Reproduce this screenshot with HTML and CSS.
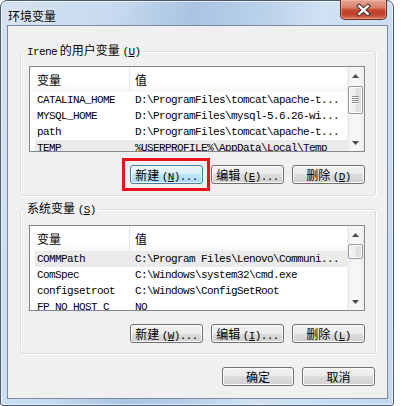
FILE: index.html
```html
<!DOCTYPE html>
<html lang="zh-CN">
<head>
  <meta charset="UTF-8">
  <meta name="viewport" content="width=device-width, initial-scale=1.0">
  <title>环境变量</title>
  <link rel="stylesheet" href="styles.css">
</head>
<body>
  <div class="window">
    <div class="titlebar">
      <span class="title">环境变量</span>
      <button class="close-btn" aria-label="关闭">
        <svg width="47" height="20" viewBox="0 0 47 20">
          <path d="M19 6 L28 14 M28 6 L19 14" stroke="#3b2f2c" stroke-width="4.5" stroke-linecap="square" fill="none"/>
          <path d="M19 6 L28 14 M28 6 L19 14" stroke="#ffffff" stroke-width="2.4" stroke-linecap="square" fill="none"/>
        </svg>
      </button>
    </div>

    <div class="client">
      <!-- User variables -->
      <fieldset class="group">
        <legend><span class="acc">Irene</span> 的用户变量 <span class="acc">(<u>U</u>)</span></legend>
        <div class="listview">
          <div class="list-body">
            <div class="list-head">
              <div class="head-cell">变量</div>
              <div class="head-cell">值</div>
            </div>
            <div class="list-row">
              <div class="cell">CATALINA_HOME</div>
              <div class="cell">D:\ProgramFiles\tomcat\apache-t...</div>
            </div>
            <div class="list-row">
              <div class="cell">MYSQL_HOME</div>
              <div class="cell">D:\ProgramFiles\mysql-5.6.26-wi...</div>
            </div>
            <div class="list-row">
              <div class="cell">path</div>
              <div class="cell">D:\ProgramFiles\tomcat\apache-t...</div>
            </div>
            <div class="list-row selected">
              <div class="cell">TEMP</div>
              <div class="cell">%USERPROFILE%\AppData\Local\Temp</div>
            </div>
          </div>
          <div class="scrollbar">
            <div class="sb-arrow">
              <svg width="7" height="4" viewBox="0 0 7 4"><polygon points="3.5,0 7,4 0,4" fill="#4a4a4a"/></svg>
            </div>
            <div class="sb-track">
              <div class="sb-thumb thumb-user"><span class="grip"></span></div>
            </div>
            <div class="sb-arrow">
              <svg width="7" height="4" viewBox="0 0 7 4"><polygon points="0,0 7,0 3.5,4" fill="#4a4a4a"/></svg>
            </div>
          </div>
        </div>
        <div class="btn-row">
          <button class="btn hot">新建 <span class="acc">(<u>N</u>)...</span></button>
          <button class="btn">编辑 <span class="acc">(<u>E</u>)...</span></button>
          <button class="btn">删除 <span class="acc">(<u>D</u>)</span></button>
        </div>
      </fieldset>

      <!-- System variables -->
      <fieldset class="group group-sys">
        <legend>系统变量 <span class="acc">(<u>S</u>)</span></legend>
        <div class="listview">
          <div class="list-body">
            <div class="list-head">
              <div class="head-cell">变量</div>
              <div class="head-cell">值</div>
            </div>
            <div class="list-row selected">
              <div class="cell">COMMPath</div>
              <div class="cell">C:\Program Files\Lenovo\Communi...</div>
            </div>
            <div class="list-row">
              <div class="cell">ComSpec</div>
              <div class="cell">C:\Windows\system32\cmd.exe</div>
            </div>
            <div class="list-row">
              <div class="cell">configsetroot</div>
              <div class="cell">C:\Windows\ConfigSetRoot</div>
            </div>
            <div class="list-row">
              <div class="cell">FP_NO_HOST_C</div>
              <div class="cell">NO</div>
            </div>
          </div>
          <div class="scrollbar">
            <div class="sb-arrow">
              <svg width="7" height="4" viewBox="0 0 7 4"><polygon points="3.5,0 7,4 0,4" fill="#4a4a4a"/></svg>
            </div>
            <div class="sb-track">
              <div class="sb-thumb thumb-sys"></div>
            </div>
            <div class="sb-arrow">
              <svg width="7" height="4" viewBox="0 0 7 4"><polygon points="0,0 7,0 3.5,4" fill="#4a4a4a"/></svg>
            </div>
          </div>
        </div>
        <div class="btn-row">
          <button class="btn">新建 <span class="acc">(<u>W</u>)...</span></button>
          <button class="btn">编辑 <span class="acc">(<u>I</u>)...</span></button>
          <button class="btn">删除 <span class="acc">(<u>L</u>)</span></button>
        </div>
      </fieldset>

      <div class="dialog-buttons">
        <button class="btn">确定</button>
        <button class="btn">取消</button>
      </div>
    </div>
  </div>
</body>
</html>
```

FILE: styles.css
```css
* {
  margin: 0;
  padding: 0;
  box-sizing: border-box;
}

body {
  font-family: "Noto Sans CJK SC", sans-serif;
  font-size: 12px;
  color: #000;
  background-color: #fff;
}

/* Window frame */
.window {
  width: 394px;
  height: 406px;
  display: flex;
  flex-direction: column;
  padding: 0 5px 6px 6px;
  border: 1px solid #4d5b6c;
  border-radius: 7px 7px 3px 3px;
  background: linear-gradient(100deg, #d3e2f3 0%, #c7daef 25%, #a9c4e2 42%, #b6cee9 54%, #d0e1f3 70%, #c3d8f0 100%);
  box-shadow: inset 0 0 0 1px rgba(255, 255, 255, 0.6);
}

.titlebar {
  height: 28px;
  display: flex;
  justify-content: space-between;
  align-items: flex-start;
}

.title {
  padding: 7px 0 0 1px;
  line-height: 16px;
  font-size: 12px;
  text-shadow: 0 0 5px rgba(255, 255, 255, 0.9);
}

.close-btn {
  width: 47px;
  height: 20px;
  margin: -1px 1px 0 0;
  display: flex;
  border: 1px solid #6b2b22;
  border-top: none;
  border-radius: 0 0 5px 5px;
  background: linear-gradient(#e7a596 0%, #d8806c 40%, #c7462f 52%, #c0402a 75%, #d9775b 100%);
  box-shadow: inset 0 0 0 1px rgba(255, 200, 180, 0.45);
}

/* Client area */
.client {
  flex: 1;
  display: flex;
  flex-direction: column;
  padding: 16px 11px 12px 12px;
  border: 1px solid #7a8ba1;
  background-color: #f0f0f0;
}

.group {
  padding: 6px 10px 11px 8px;
  border: 1px solid #d5dfe5;
  border-radius: 3px;
  box-shadow: inset 1px 1px 0 #fff, 1px 1px 0 #fff;
}

.group-sys {
  margin-top: 4px;
  padding-top: 7px;
  padding-bottom: 10px;
}

.group legend {
  margin-left: -4px;
  padding: 0 2px;
  line-height: 16px;
}

/* Mnemonic / ASCII parts in the bitmap-like font */
.acc {
  font-family: "Liberation Mono", monospace;
  font-size: 11px;
  letter-spacing: -0.6px;
}

/* List views */
.listview {
  height: 86px;
  display: flex;
  border: 1px solid #828790;
  background-color: #fff;
}

.list-body {
  flex: 1;
  overflow: hidden;
}

.list-head {
  height: 25px;
  display: grid;
  grid-template-columns: 100px 1fr;
  background: linear-gradient(#fff 0%, #fff 60%, #f7f8fa 100%);
}

.head-cell {
  padding-left: 7px;
  line-height: 25px;
}

.head-cell:first-child {
  border-right: 1px solid #e3e6ea;
}

.head-cell:last-child {
  padding-left: 5px;
}

.list-row {
  height: 16px;
  display: grid;
  grid-template-columns: 100px 1fr;
  font-family: "Liberation Mono", monospace;
  font-size: 11px;
  letter-spacing: -0.6px;
  line-height: 16px;
}

.list-row.selected {
  background: linear-gradient(to right, transparent 5px, #ebebeb 5px);
}

.cell {
  padding-left: 7px;
  white-space: nowrap;
  overflow: hidden;
}

.cell:last-child {
  padding-left: 5px;
}

/* Scroll bars */
.scrollbar {
  width: 17px;
  display: flex;
  flex-direction: column;
  background: linear-gradient(to right, #e9e9e9, #f6f6f6 25%, #f6f6f6 75%, #ebebeb);
}

.sb-arrow {
  height: 17px;
  display: flex;
  justify-content: center;
  align-items: center;
}

.sb-track {
  flex: 1;
}

.sb-thumb {
  margin: 0 1px;
  display: flex;
  justify-content: center;
  align-items: center;
  border: 1px solid #9a9a9a;
  border-radius: 2px;
  background: linear-gradient(to right, #f4f4f4, #ececec 50%, #dcdcdc 51%, #e2e2e2);
  box-shadow: inset 0 0 0 1px #fbfbfb;
}

.thumb-user {
  margin-top: 2px;
  height: 28px;
}

.thumb-sys {
  margin-top: 1px;
  height: 15px;
}

.grip {
  width: 7px;
  height: 8px;
  background: repeating-linear-gradient(#8c8c8c 0 1px, #fafafa 1px 2px);
}

/* Buttons */
.btn-row {
  margin-top: 13px;
  display: flex;
  justify-content: flex-end;
  gap: 8px;
}

.dialog-buttons {
  margin: 13px 1px 0 0;
  display: flex;
  justify-content: flex-end;
  gap: 8px;
}

.btn {
  width: 73px;
  height: 19px;
  font-family: "Noto Sans CJK SC", sans-serif;
  font-size: 12px;
  line-height: 17px;
  color: #000;
  border: 1px solid #707070;
  border-radius: 3px;
  background: linear-gradient(#f2f2f2 0%, #ebebeb 50%, #dddddd 50%, #cfcfcf 100%);
  box-shadow: inset 0 0 0 1px #fcfcfc;
}

.dialog-buttons .btn:first-child {
  width: 72px;
}

.btn.hot {
  position: relative;
  border-color: #3c7fb1;
  background: linear-gradient(#eaf6fd 0%, #d9f0fc 50%, #bee6fd 50%, #a7d9f5 100%);
}

/* red annotation box around the highlighted button */
.btn.hot::after {
  content: "";
  position: absolute;
  top: -8px;
  right: -8px;
  bottom: -8px;
  left: -9px;
  border: 3px solid #e8141c;
}
```
